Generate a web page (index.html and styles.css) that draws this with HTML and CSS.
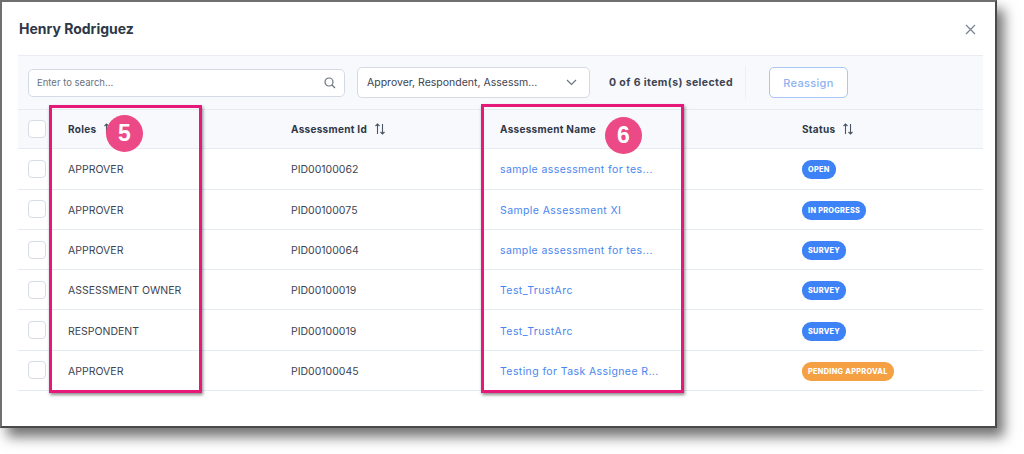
FILE: index.html
```html
<!DOCTYPE html>
<html lang="en">
<head>
  <meta charset="UTF-8">
  <meta name="viewport" content="width=device-width, initial-scale=1.0">
  <title>Henry Rodriguez - Assignments</title>
  <link rel="stylesheet" href="styles.css">
</head>
<body>
  <div class="modal">
    <div class="modal-header">
      <h1>Henry Rodriguez</h1>
      <svg class="close" width="11" height="11" viewBox="0 0 11 11"><path d="M1 1L10 10M10 1L1 10" stroke="#7b8495" stroke-width="1.3" fill="none"/></svg>
    </div>

    <div class="content">
      <div class="toolbar">
        <div class="search">
          <span class="placeholder">Enter to search...</span>
          <svg width="12" height="12" viewBox="0 0 12 12"><circle cx="5" cy="5" r="4" stroke="#6b7280" stroke-width="1.2" fill="none"/><path d="M8 8L11 11" stroke="#6b7280" stroke-width="1.2"/></svg>
        </div>
        <div class="select">
          <span class="select-text">Approver, Respondent, Assessm...</span>
          <svg width="11" height="7" viewBox="0 0 11 7"><path d="M1 1L5.5 5.5L10 1" stroke="#6b7280" stroke-width="1.2" fill="none"/></svg>
        </div>
        <span class="count">0 of 6 item(s) selected</span>
        <span class="divider"></span>
        <button class="reassign">Reassign</button>
      </div>

      <div class="grid head">
        <div class="cell"><span class="check"></span></div>
        <div class="cell">Roles <svg class="sort" width="10" height="12" viewBox="0 0 10 12"><path d="M2.5 11V1M0.5 3L2.5 1L4.5 3M7.5 1V11M5.5 9L7.5 11L9.5 9" stroke="#4b5563" stroke-width="1.1" fill="none"/></svg></div>
        <div class="cell">Assessment Id <svg class="sort" width="10" height="12" viewBox="0 0 10 12"><path d="M2.5 11V1M0.5 3L2.5 1L4.5 3M7.5 1V11M5.5 9L7.5 11L9.5 9" stroke="#4b5563" stroke-width="1.1" fill="none"/></svg></div>
        <div class="cell">Assessment Name</div>
        <div class="cell">Status <svg class="sort" width="10" height="12" viewBox="0 0 10 12"><path d="M2.5 11V1M0.5 3L2.5 1L4.5 3M7.5 1V11M5.5 9L7.5 11L9.5 9" stroke="#4b5563" stroke-width="1.1" fill="none"/></svg></div>
      </div>

      <div class="grid row">
        <div class="cell"><span class="check"></span></div>
        <div class="cell">APPROVER</div>
        <div class="cell">PID00100062</div>
        <div class="cell"><a class="name" href="#">sample assessment for tes...</a></div>
        <div class="cell"><span class="badge">OPEN</span></div>
      </div>
      <div class="grid row">
        <div class="cell"><span class="check"></span></div>
        <div class="cell">APPROVER</div>
        <div class="cell">PID00100075</div>
        <div class="cell"><a class="name" href="#">Sample Assessment XI</a></div>
        <div class="cell"><span class="badge">IN PROGRESS</span></div>
      </div>
      <div class="grid row">
        <div class="cell"><span class="check"></span></div>
        <div class="cell">APPROVER</div>
        <div class="cell">PID00100064</div>
        <div class="cell"><a class="name" href="#">sample assessment for tes...</a></div>
        <div class="cell"><span class="badge">SURVEY</span></div>
      </div>
      <div class="grid row">
        <div class="cell"><span class="check"></span></div>
        <div class="cell">ASSESSMENT OWNER</div>
        <div class="cell">PID00100019</div>
        <div class="cell"><a class="name" href="#">Test_TrustArc</a></div>
        <div class="cell"><span class="badge">SURVEY</span></div>
      </div>
      <div class="grid row">
        <div class="cell"><span class="check"></span></div>
        <div class="cell">RESPONDENT</div>
        <div class="cell">PID00100019</div>
        <div class="cell"><a class="name" href="#">Test_TrustArc</a></div>
        <div class="cell"><span class="badge">SURVEY</span></div>
      </div>
      <div class="grid row">
        <div class="cell"><span class="check"></span></div>
        <div class="cell">APPROVER</div>
        <div class="cell">PID00100045</div>
        <div class="cell"><a class="name" href="#">Testing for Task Assignee R...</a></div>
        <div class="cell"><span class="badge pending">PENDING APPROVAL</span></div>
      </div>
    </div>
  </div>

  <!-- callouts -->
  <div class="callout box-roles"></div>
  <div class="callout box-name"></div>
  <div class="marker marker-5">5</div>
  <div class="marker marker-6">6</div>
</body>
</html>
```

FILE: styles.css
```css
/* General Styling */
body {
  font-family: Inter, "Open Sans", sans-serif;
  background: #fff;
  color: #3d4452;
  margin: 0;
  padding: 0;
  position: relative;
  width: 1024px;
  height: 454px;
  overflow: hidden;
}

.modal {
  box-sizing: border-box;
  width: 997px;
  height: 428px;
  background: #fff;
  border: 2px solid #6f6f6f;
  border-right-color: #4a4a4a;
  border-bottom-color: #4a4a4a;
  box-shadow: 7px 9px 12px rgba(0, 0, 0, 0.55);
}

.modal-header {
  height: 53px;
  display: flex;
  align-items: center;
  justify-content: space-between;
  padding: 0 19px 0 17px;
}

h1 {
  margin: 0;
  font-size: 14px;
  font-weight: 700;
  color: #2d3748;
}

.close {
  margin-top: 2px;
}

.content {
  padding: 0 12px 0 16px;
}

/* Toolbar */
.toolbar {
  height: 54px;
  box-sizing: border-box;
  background: #f7f9fc;
  border-top: 1px solid #e9ecf2;
  display: flex;
  align-items: center;
  padding: 0 10px;
}

.search {
  box-sizing: border-box;
  width: 317px;
  height: 28px;
  background: #fff;
  border: 1px solid #d5dbe5;
  border-radius: 5px;
  display: flex;
  align-items: center;
  justify-content: space-between;
  padding: 0 8px;
}

.placeholder {
  font-size: 9.5px;
  color: #6b7280;
}

.select {
  box-sizing: border-box;
  width: 233px;
  height: 31px;
  margin-left: 12px;
  background: #fff;
  border: 1px solid #d5dbe5;
  border-radius: 5px;
  display: flex;
  align-items: center;
  justify-content: space-between;
  padding: 0 12px 0 9px;
}

.select-text {
  font-size: 10.5px;
  color: #3d4452;
  white-space: nowrap;
}

.count {
  margin-left: 19px;
  font-size: 10.5px;
  font-weight: 700;
  letter-spacing: 0.4px;
  color: #3d4452;
}

.divider {
  width: 1px;
  height: 34px;
  background: #edf0f5;
  margin-left: 12px;
}

.reassign {
  margin-left: 23px;
  width: 79px;
  height: 31px;
  background: #fff;
  border: 1px solid #a9c6f6;
  border-radius: 5px;
  color: #8db2f2;
  font-family: inherit;
  font-size: 11px;
  font-weight: 500;
  letter-spacing: 0.3px;
}

/* Table */
.grid {
  display: grid;
  grid-template-columns: 40px 223px 209px 302px 1fr;
  height: 40.3px;
  box-sizing: border-box;
  border-bottom: 1px solid #e6eaf2;
}

.head {
  background: #f7f9fc;
  border-top: 1px solid #e6eaf2;
  font-weight: 700;
  color: #2f3747;
  font-size: 10px;
  letter-spacing: 0.3px;
}

.row {
  font-size: 10.5px;
  padding-top: 2px;
}

.cell {
  display: flex;
  align-items: center;
  padding-left: 10px;
  white-space: nowrap;
}

.sort {
  margin-left: 8px;
}

.check {
  box-sizing: border-box;
  width: 18px;
  height: 18px;
  border: 1px solid #d7dce5;
  border-radius: 4px;
  background: #fff;
}

.row .check {
  margin-top: -2px;
}

.name {
  color: #4a86f0;
  text-decoration: none;
  letter-spacing: 0.4px;
}

.badge {
  background: #3d82f6;
  color: #fff;
  font-size: 7.3px;
  font-weight: 800;
  padding: 5px 6px;
  border-radius: 9px;
  letter-spacing: 0.3px;
}

.badge.pending {
  background: #f5a043;
}

/* Callouts over the screenshot */
.callout {
  position: absolute;
  box-sizing: border-box;
  border: 3.5px solid #e6197b;
  box-shadow: 1px 2px 3px rgba(0, 0, 0, 0.45);
}

.box-roles {
  left: 49px;
  top: 105px;
  width: 153px;
  height: 288px;
}

.box-name {
  left: 481px;
  top: 104px;
  width: 203px;
  height: 289px;
}

.marker {
  position: absolute;
  width: 37px;
  height: 37px;
  border-radius: 50%;
  background: #ec4a86;
  color: #fff;
  font-family: "Liberation Sans", Arial, sans-serif;
  font-size: 23px;
  font-weight: 700;
  display: flex;
  align-items: center;
  justify-content: center;
}

.marker-5 {
  left: 106px;
  top: 115px;
}

.marker-6 {
  left: 605px;
  top: 117px;
}
```
